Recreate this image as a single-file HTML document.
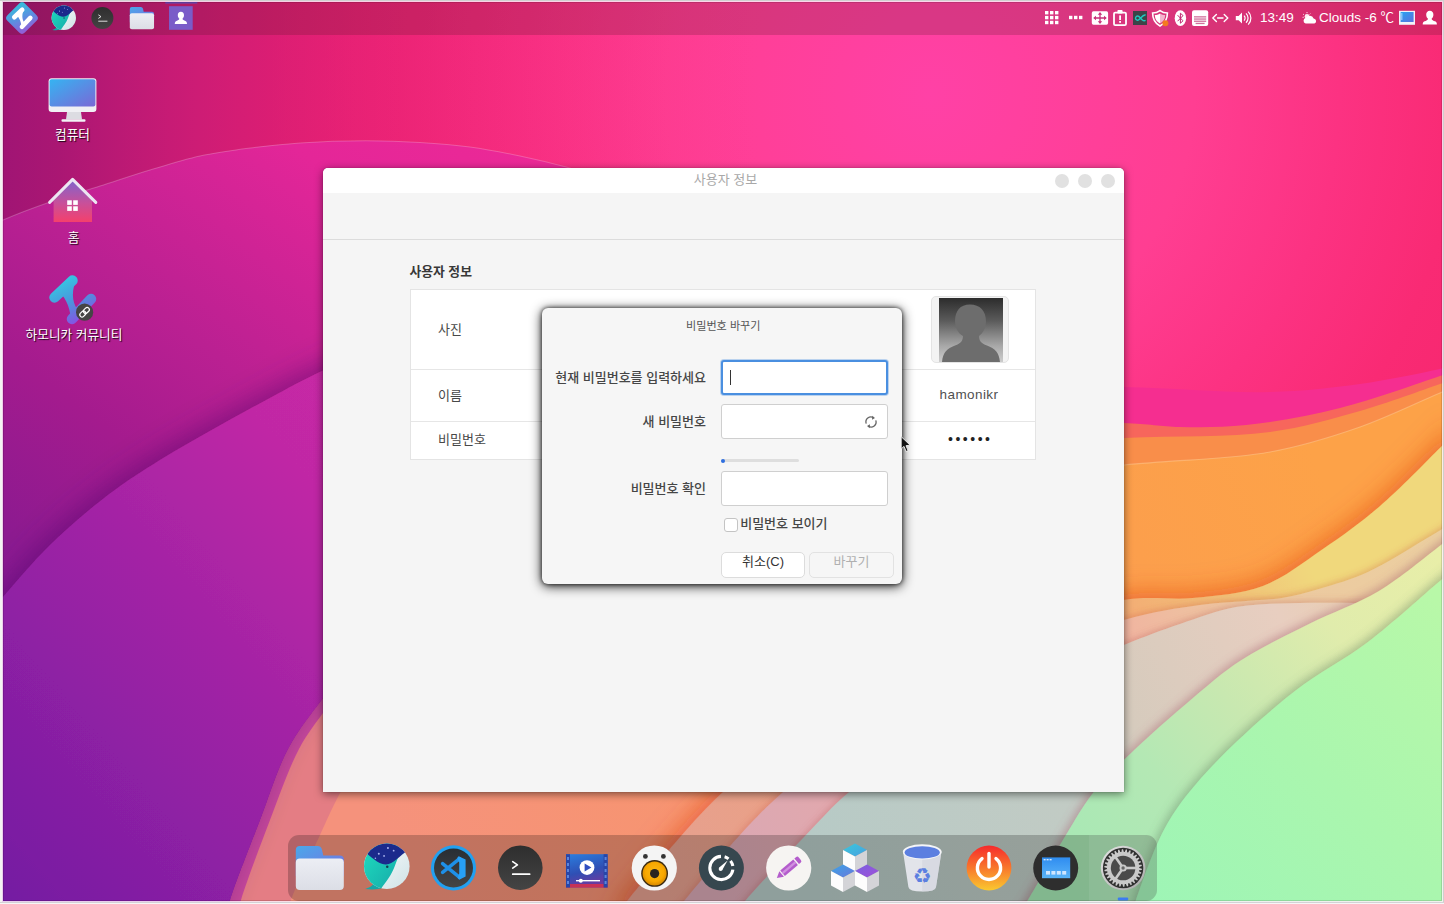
<!DOCTYPE html>
<html lang="ko">
<head>
<meta charset="utf-8">
<title>사용자 정보</title>
<style>
html,body{margin:0;padding:0;}
body{width:1444px;height:904px;overflow:hidden;background:#f3f4f2;position:relative;
 font-family:"Liberation Sans","Noto Sans CJK KR",sans-serif;font-size:13px;color:#444;}
#bg{position:absolute;left:2px;top:1px;width:1441px;height:901px;overflow:hidden;background:#f0258a;}
#desk{position:absolute;left:3px;top:2px;width:1439px;height:899px;overflow:hidden;}
#frame{position:absolute;left:2px;top:1px;width:1441px;height:901px;box-sizing:border-box;border:1px solid rgba(255,240,250,0.84);box-shadow:inset 0 0 0 1px rgba(0,0,0,0.12);pointer-events:none;}
.oe{position:absolute;}
#wall{position:absolute;left:-2px;top:-1px;width:1444px;height:904px;}
#panel{position:absolute;left:0;top:0;width:1439px;height:33px;background:rgba(80,25,35,0.22);}
.abs{position:absolute;}
/* window */
#win{position:absolute;left:320px;top:166px;width:801px;height:624px;background:#f5f5f5;border-radius:5px 5px 0 0;
 box-shadow:0 2px 9px rgba(0,0,0,0.5),0 0 1px rgba(0,0,0,0.45);}
#titlebar{position:absolute;left:0;top:0;width:100%;height:25px;background:#fff;border-radius:5px 5px 0 0;}
#title{position:absolute;left:0;width:100%;top:3px;text-align:center;color:#a8a8a8;font-size:13px;line-height:18px;padding-left:4px;box-sizing:border-box;}
.wb{position:absolute;top:6px;width:14px;height:14px;border-radius:50%;background:#e1e1e1;}
#sep{position:absolute;left:0;top:71px;width:100%;height:1px;background:#dcdcdc;}
#h1{position:absolute;left:86.5px;top:93.5px;font-weight:bold;font-size:12.8px;color:#383838;line-height:20px;}
#tbl{position:absolute;left:87px;top:121px;width:626px;height:171px;background:#fff;border:1px solid #e4e4e4;box-sizing:border-box;}
.rowline{position:absolute;left:0;width:100%;height:1px;background:#e6e6e6;}
.lbl{position:absolute;left:27px;font-size:13px;color:#484848;line-height:20px;}
/* dialog */
#dlg{position:absolute;left:538.5px;top:305.5px;width:360.5px;height:276.5px;background:#f6f6f6;border-radius:6px;
 box-shadow:0 2px 12px rgba(0,0,0,0.9),0 0 4px rgba(0,0,0,0.7);}
.dl{position:absolute;right:196px;font-size:13px;color:#464646;line-height:20px;white-space:nowrap;font-weight:500;}
.ent{position:absolute;left:179px;width:167.5px;height:35.6px;background:#fff;border:1px solid #cfcfcf;border-radius:3px;box-sizing:border-box;}
.btn{position:absolute;top:244px;height:26.2px;width:84px;border:1px solid #dcdcdc;border-radius:5px;box-sizing:border-box;text-align:center;font-size:13px;line-height:17px;}
.ptxt{position:absolute;color:#fff;font-size:13.5px;line-height:20px;white-space:nowrap;}
.dlabel{position:absolute;width:153px;text-align:center;color:#fff;font-size:12.7px;line-height:20px;text-shadow:1px 1px 1px rgba(0,0,0,0.85);white-space:nowrap;}
#icons{position:absolute;left:-3px;top:-2px;width:1444px;height:904px;pointer-events:none;}
#dockact{position:absolute;right:0;top:0;width:68px;height:100%;background:rgba(255,255,255,0.07);border-radius:0 11px 11px 0;}
/* dock */
#dock{position:absolute;left:285px;top:833px;width:869px;height:66px;border-radius:11px;background:rgba(0,0,0,0.21);}
</style>
</head>
<body>
<div id="bg">
<svg id="wall" viewBox="0 0 1444 904" width="1444" height="904">
<defs>
<filter id="shLs" x="-5%" y="-5%" width="110%" height="110%"><feDropShadow dx="-3" dy="-5" stdDeviation="12" flood-color="#e04010" flood-opacity="0.55"/></filter>
<filter id="shPk" x="-5%" y="-5%" width="110%" height="110%"><feDropShadow dx="-1" dy="-2" stdDeviation="3" flood-color="#c85040" flood-opacity="0.3"/></filter>
<filter id="shB" x="-5%" y="-5%" width="110%" height="110%"><feDropShadow dx="-1" dy="-2" stdDeviation="3" flood-color="#b05050" flood-opacity="0.3"/></filter>
<filter id="shG1" x="-5%" y="-5%" width="110%" height="110%"><feDropShadow dx="-2" dy="-3" stdDeviation="4" flood-color="#a05868" flood-opacity="0.4"/></filter>
<filter id="shG2" x="-5%" y="-5%" width="110%" height="110%"><feDropShadow dx="-2" dy="-3" stdDeviation="5" flood-color="#587858" flood-opacity="0.4"/></filter>
<filter id="shI" x="-5%" y="-5%" width="110%" height="110%"><feDropShadow dx="-4" dy="-6" stdDeviation="13" flood-color="#4a0868" flood-opacity="0.42"/></filter>
<filter id="shP" x="-5%" y="-5%" width="110%" height="110%"><feDropShadow dx="0" dy="2" stdDeviation="3" flood-color="#c02860" flood-opacity="0.3"/></filter>
<linearGradient id="gOr" x1="400" y1="860" x2="1320" y2="470" gradientUnits="userSpaceOnUse"><stop offset="0" stop-color="#f5927c"/><stop offset="0.45" stop-color="#f8966a"/><stop offset="0.8" stop-color="#fc9f4c"/><stop offset="1" stop-color="#fda248"/></linearGradient>
<linearGradient id="gLs" x1="650" y1="870" x2="1440" y2="470" gradientUnits="userSpaceOnUse"><stop offset="0" stop-color="#e5a090"/><stop offset="0.55" stop-color="#f5a272"/><stop offset="0.72" stop-color="#f0c078"/><stop offset="0.82" stop-color="#f0d87c"/><stop offset="1" stop-color="#f0d87c"/></linearGradient>
<linearGradient id="gPk" x1="700" y1="870" x2="1440" y2="540" gradientUnits="userSpaceOnUse"><stop offset="0" stop-color="#d8a8b5"/><stop offset="0.5" stop-color="#f2a8a0"/><stop offset="0.75" stop-color="#edc8a0"/><stop offset="1" stop-color="#ebcfa0"/></linearGradient>
<linearGradient id="gB" x1="800" y1="860" x2="1440" y2="540" gradientUnits="userSpaceOnUse"><stop offset="0" stop-color="#b6cac6"/><stop offset="0.38" stop-color="#c2cbc4"/><stop offset="0.5" stop-color="#d6cbbd"/><stop offset="0.75" stop-color="#e8cec0"/><stop offset="1" stop-color="#ebcfa0"/></linearGradient>
<linearGradient id="gG1" x1="1050" y1="880" x2="1440" y2="560" gradientUnits="userSpaceOnUse"><stop offset="0" stop-color="#a5e8b5"/><stop offset="0.3" stop-color="#b4e8b4"/><stop offset="0.5" stop-color="#c8e8b0"/><stop offset="0.75" stop-color="#e0ecac"/><stop offset="1" stop-color="#e8eea8"/></linearGradient>
<linearGradient id="gG2" x1="1150" y1="900" x2="1440" y2="600" gradientUnits="userSpaceOnUse"><stop offset="0" stop-color="#9ef5b6"/><stop offset="0.5" stop-color="#aaf6ae"/><stop offset="1" stop-color="#b8f8a8"/></linearGradient>
<radialGradient id="gTop" cx="930" cy="95" r="660" gradientUnits="userSpaceOnUse"><stop offset="0" stop-color="#ff41a6"/><stop offset="0.4" stop-color="#ff3e92"/><stop offset="0.62" stop-color="#fc3282"/><stop offset="0.8" stop-color="#f92a74"/><stop offset="1" stop-color="#f6266c"/></radialGradient>
<linearGradient id="gTopL" x1="0" y1="0" x2="520" y2="0" gradientUnits="userSpaceOnUse"><stop offset="0" stop-color="#8e0f6c"/><stop offset="0.25" stop-color="#a81270"/><stop offset="1" stop-color="#ee2080"/></linearGradient>
<linearGradient id="gDark" x1="0" y1="0" x2="760" y2="0" gradientUnits="userSpaceOnUse"><stop offset="0" stop-color="#8a1076" stop-opacity="0.8"/><stop offset="0.08" stop-color="#8a1076" stop-opacity="0.7"/><stop offset="0.26" stop-color="#a4127e" stop-opacity="0.5"/><stop offset="0.46" stop-color="#c0107e" stop-opacity="0.3"/><stop offset="0.75" stop-color="#e0187a" stop-opacity="0.12"/><stop offset="1" stop-color="#e81c7c" stop-opacity="0"/></linearGradient>
<linearGradient id="gLeft" x1="600" y1="140" x2="0" y2="900" gradientUnits="userSpaceOnUse"><stop offset="0" stop-color="#ee2a96"/><stop offset="0.2" stop-color="#e42698"/><stop offset="0.42" stop-color="#ba2092"/><stop offset="0.55" stop-color="#a41b8e"/><stop offset="0.7" stop-color="#8c1a90"/><stop offset="1" stop-color="#72189a"/></linearGradient>
<linearGradient id="gLeft2" x1="700" y1="300" x2="0" y2="900" gradientUnits="userSpaceOnUse"><stop offset="0" stop-color="#e42ca4"/><stop offset="0.45" stop-color="#c028a5"/><stop offset="0.62" stop-color="#a624a5"/><stop offset="0.8" stop-color="#8d20a4"/><stop offset="1" stop-color="#741ca2"/></linearGradient>
</defs>
<rect width="1444" height="904" fill="url(#gOr)"/>
<path d="M612.0,920.0 C617.3,913.3 621.0,908.5 628.0,900.0 C640.6,884.5 665.0,854.1 682.0,835.0 C696.0,819.2 706.4,807.4 722.0,793.0 C741.2,775.3 764.3,755.4 790.0,738.0 C819.4,718.1 855.3,698.3 890.0,682.0 C925.2,665.5 962.1,653.4 1000.0,640.0 C1039.9,626.0 1088.3,606.1 1124.0,600.0 C1150.0,595.5 1170.0,600.3 1193.0,598.0 C1216.3,595.7 1241.3,594.2 1263.0,586.0 C1284.6,577.8 1303.6,562.2 1323.0,549.0 C1342.3,535.9 1360.4,522.9 1379.0,507.0 C1399.7,489.3 1426.3,461.4 1441.0,447.0 C1449.2,438.9 1453.7,434.3 1460.0,428.0 L1460,920 L612,920 Z" fill="url(#gLs)" filter="url(#shLs)"/>
<path d="M668.0,920.0 C673.7,913.3 677.7,908.6 685.0,900.0 C698.1,884.5 722.5,854.0 740.0,835.0 C754.6,819.1 765.8,807.3 782.0,793.0 C801.5,775.8 823.7,756.6 850.0,740.0 C881.4,720.2 919.2,703.2 960.0,685.0 C1008.8,663.2 1079.2,633.2 1124.0,620.0 C1153.7,611.3 1177.8,608.2 1200.0,605.0 C1217.2,602.6 1231.6,602.2 1246.0,601.0 C1258.7,599.9 1270.0,599.9 1282.0,598.0 C1294.3,596.0 1305.9,592.9 1319.0,589.0 C1334.3,584.5 1351.5,579.5 1368.0,572.0 C1386.4,563.6 1407.5,549.8 1424.0,540.0 C1437.4,532.1 1448.0,525.3 1460.0,518.0 L1460,920 L668,920 Z" fill="url(#gPk)" filter="url(#shPk)"/>
<path d="M730.0,920.0 C735.3,913.3 738.8,908.4 746.0,900.0 C759.4,884.4 787.6,854.1 806.0,835.0 C821.1,819.3 832.0,806.6 848.0,793.0 C866.1,777.5 886.3,762.8 910.0,748.0 C938.8,730.0 975.3,711.8 1010.0,695.0 C1046.4,677.4 1092.5,657.8 1124.0,645.0 C1145.8,636.1 1161.2,630.4 1180.0,624.0 C1198.6,617.7 1216.5,610.5 1236.0,607.0 C1256.4,603.3 1277.5,603.7 1300.0,603.0 C1325.2,602.2 1353.3,603.0 1380.0,603.0 C1406.7,603.0 1433.3,603.0 1460.0,603.0 L1460,920 L730,920 Z" fill="url(#gB)" filter="url(#shB)"/>
<path d="M1015.0,920.0 C1019.3,913.3 1022.7,908.7 1028.0,900.0 C1037.5,884.6 1054.2,854.2 1066.0,835.0 C1075.6,819.4 1082.7,806.1 1093.0,793.0 C1103.4,779.8 1114.2,769.4 1128.0,756.0 C1146.0,738.5 1172.8,714.9 1193.0,698.0 C1209.7,684.0 1222.3,672.6 1240.0,661.0 C1260.3,647.7 1285.8,635.7 1309.0,624.0 C1332.1,612.4 1357.0,604.2 1379.0,591.0 C1401.0,577.8 1426.3,556.2 1441.0,545.0 C1449.2,538.7 1453.7,535.0 1460.0,530.0 L1460,920 L1015,920 Z" fill="url(#gG1)" filter="url(#shG1)"/>
<path d="M1130.0,920.0 C1132.0,913.3 1133.1,908.4 1136.0,900.0 C1141.0,885.3 1151.0,856.8 1159.0,840.0 C1165.1,827.1 1169.8,818.6 1178.0,807.0 C1188.6,792.0 1202.6,775.8 1219.0,759.0 C1239.9,737.6 1269.2,711.0 1295.0,691.0 C1318.9,672.4 1344.2,660.0 1368.0,642.0 C1392.6,623.4 1423.4,594.7 1440.0,581.0 C1448.7,573.9 1453.3,570.3 1460.0,565.0 L1460,920 L1130,920 Z" fill="url(#gG2)" filter="url(#shG2)"/>
<path d="M600.0,520.0 C700.0,510.0 807.3,499.8 900.0,490.0 C980.1,481.5 1057.3,471.7 1124.0,465.0 C1177.8,459.6 1227.5,459.7 1270.0,452.0 C1303.9,445.8 1331.2,437.1 1360.0,427.0 C1387.8,417.3 1422.2,400.3 1440.0,393.0 C1448.9,389.3 1453.3,387.7 1460.0,385.0 L1460,-20 L-20,-20 L-20,520 Z" fill="#f98e4a"/>
<path d="M600.0,520.0 C700.0,510.0 807.3,499.8 900.0,490.0 C980.1,481.5 1057.3,471.7 1124.0,465.0 C1177.8,459.6 1227.5,459.7 1270.0,452.0 C1303.9,445.8 1331.2,437.1 1360.0,427.0 C1387.8,417.3 1422.2,400.3 1440.0,393.0 C1448.9,389.3 1453.3,387.7 1460.0,385.0" fill="none" stroke="#ffd9a8" stroke-opacity="0.4" stroke-width="1.2"/>
<path d="M600.0,470.0 C700.0,463.3 807.3,455.6 900.0,450.0 C980.1,445.2 1057.3,441.2 1124.0,438.0 C1177.8,435.5 1227.4,437.8 1270.0,432.0 C1303.9,427.4 1331.1,419.2 1360.0,411.0 C1387.6,403.1 1422.2,390.1 1440.0,384.0 C1448.9,380.9 1453.3,379.3 1460.0,377.0 L1460,-20 L-20,-20 L-20,470 Z" fill="#f7665c"/>
<path d="M600.0,440.0 C700.0,435.0 807.3,427.7 900.0,425.0 C980.1,422.6 1074.2,421.4 1124.0,423.0 C1148.9,423.8 1160.6,426.6 1180.0,427.0 C1201.1,427.4 1222.2,427.5 1246.0,425.0 C1274.7,422.0 1308.4,415.9 1340.0,408.0 C1373.1,399.8 1419.4,382.9 1440.0,376.0 C1449.2,372.9 1453.3,371.3 1460.0,369.0 L1460,-20 L-20,-20 L-20,440 Z" fill="#f52e90"/>
<path d="M600.0,380.0 C700.0,381.7 807.3,383.8 900.0,385.0 C980.1,386.0 1057.3,385.6 1124.0,387.0 C1177.9,388.2 1227.2,393.2 1270.0,392.0 C1303.6,391.1 1331.0,388.0 1360.0,384.0 C1387.5,380.2 1422.3,372.9 1440.0,369.0 C1448.9,367.0 1453.3,365.7 1460.0,364.0 L1460,-20 L-20,-20 L-20,380 Z" fill="url(#gTop)"/>
<rect x="0" y="0" width="760" height="260" fill="url(#gDark)"/>
<path d="M285.0,920.0 C287.0,913.3 287.9,908.4 291.0,900.0 C296.8,884.4 311.2,854.0 320.0,835.0 C326.9,820.0 331.4,809.2 339.0,795.0 C348.2,777.9 359.3,758.3 372.0,740.0 C385.9,720.0 402.5,699.5 420.0,680.0 C438.4,659.5 460.0,640.0 480.0,620.0 L480,500 L-20,500 L-20,920 Z" fill="#e47d84"/>
<path d="M236.0,920.0 C237.7,913.3 238.3,908.8 241.0,900.0 C246.5,882.1 260.1,845.8 270.0,820.0 C279.4,795.5 288.8,768.3 299.0,749.0 C306.7,734.5 313.6,725.9 323.0,713.0 C334.8,696.8 349.5,677.4 365.0,660.0 C381.6,641.3 401.7,623.3 420.0,605.0 L420,500 L-20,500 L-20,920 Z" fill="#c4489a"/>
<path d="M-20.0,231.0 C-12.3,227.3 -6.1,223.9 3.0,220.0 C15.8,214.5 34.0,207.6 50.0,202.0 C66.3,196.3 83.3,191.3 100.0,186.0 C116.7,180.7 133.3,175.0 150.0,170.0 C166.6,165.0 183.2,159.7 200.0,156.0 C216.6,152.4 233.3,150.2 250.0,148.0 C266.6,145.8 282.2,144.2 300.0,143.0 C320.5,141.6 345.1,140.8 366.0,140.8 C384.9,140.8 402.4,141.4 420.0,142.5 C437.0,143.5 453.4,144.8 470.0,147.0 C486.7,149.3 503.7,152.6 520.0,156.0 C535.7,159.3 551.9,163.2 566.0,167.0 C578.2,170.3 588.3,173.2 600.0,177.0 C612.8,181.1 626.7,186.3 640.0,191.0 L900,300 L700,560 L420.0,590.0 C400.7,610.0 379.1,630.8 362.0,650.0 C347.3,666.6 335.3,681.5 323.0,698.0 C310.7,714.5 298.1,730.0 288.0,749.0 C276.8,770.1 269.4,795.6 260.0,820.0 C250.1,845.8 235.6,882.1 230.0,900.0 C227.3,908.8 226.7,913.3 225.0,920.0 L-20,920 Z" fill="url(#gLeft)"/>
<path d="M-20.0,231.0 C-12.3,227.3 -6.1,223.9 3.0,220.0 C15.8,214.5 34.0,207.6 50.0,202.0 C66.3,196.3 83.3,191.3 100.0,186.0 C116.7,180.7 133.3,175.0 150.0,170.0 C166.6,165.0 183.2,159.7 200.0,156.0 C216.6,152.4 233.3,150.2 250.0,148.0 C266.6,145.8 282.2,144.2 300.0,143.0 C320.5,141.6 345.1,140.8 366.0,140.8 C384.9,140.8 402.4,141.4 420.0,142.5 C437.0,143.5 453.4,144.8 470.0,147.0 C486.7,149.3 503.7,152.6 520.0,156.0 C535.7,159.3 551.9,163.2 566.0,167.0 C578.2,170.3 588.3,173.2 600.0,177.0 C612.8,181.1 626.7,186.3 640.0,191.0" fill="none" stroke="#ffffff" stroke-opacity="0.22" stroke-width="1.1"/>
<path d="M-20.0,625.0 C-12.3,615.7 -6.2,607.6 3.0,597.0 C15.8,582.2 32.9,561.7 50.0,545.0 C67.8,527.6 88.8,509.7 108.0,495.0 C125.4,481.7 142.1,471.2 160.0,460.0 C178.4,448.5 198.3,437.5 217.0,427.0 C234.9,416.9 252.4,407.4 270.0,398.0 C287.4,388.7 301.7,380.5 322.0,371.0 C349.3,358.2 381.9,343.2 420.0,330.0 C470.5,312.5 540.0,296.7 600.0,280.0 L700,600 L420.0,590.0 C400.7,610.0 379.1,630.8 362.0,650.0 C347.3,666.6 335.3,681.5 323.0,698.0 C310.7,714.5 298.1,730.0 288.0,749.0 C276.8,770.1 269.4,795.6 260.0,820.0 C250.1,845.8 235.6,882.1 230.0,900.0 C227.3,908.8 226.7,913.3 225.0,920.0 L-20,920 Z" fill="url(#gLeft2)" filter="url(#shI)"/>
</svg>
</div>
<div id="desk">
<div id="panel"></div>
<div class="ptxt" style="left:1257px;top:6px;">13:49</div>
<div class="ptxt" style="left:1316px;top:6px;">Clouds -6 ℃</div>
<div class="dlabel" style="left:-7px;top:123px;">컴퓨터</div>
<div class="dlabel" style="left:-6px;top:226px;">홈</div>
<div class="dlabel" style="left:-5.5px;top:323px;">하모니카 커뮤니티</div>
<div id="win">
 <div id="titlebar"><div id="title">사용자 정보</div>
  <div class="wb" style="left:732px"></div><div class="wb" style="left:755px"></div><div class="wb" style="left:778px"></div>
 </div>
 <div id="sep"></div>
 <div id="h1">사용자 정보</div>
 <div id="tbl">
  <div class="rowline" style="top:79px"></div><div class="rowline" style="top:131px"></div>
  <div class="lbl" style="top:30px">사진</div>
  <div class="lbl" style="top:96px">이름</div>
  <div class="lbl" style="top:140px">비밀번호</div>
  <div class="abs" style="left:520px;top:6px;width:78px;height:67px;background:#f3f3f3;border:1px solid #e4e4e4;border-radius:5px;box-sizing:border-box;"></div>
  <svg class="abs" style="left:528px;top:8px" width="64" height="64" viewBox="0 0 64 64">
   <defs><linearGradient id="avG" x1="0" y1="0" x2="0" y2="1"><stop offset="0" stop-color="#2c2c2c"/><stop offset="0.35" stop-color="#5a5a5a"/><stop offset="0.75" stop-color="#a8a8a8"/><stop offset="1" stop-color="#cdcdcd"/></linearGradient></defs>
   <rect width="64" height="64" fill="url(#avG)"/>
   <path d="M31,6.500 C41,6.500 47,13 47,23 C47,30 44,35 40,38 C40,42.500 42,45.500 48,47.500 C56,50.500 60,54 61,64 L3,64 C4,54 8,50.500 16,47.500 C22,45.500 24,42.500 24,38 C19,35 16,30 16,23 C16,13 21,6.500 31,6.500 Z" fill="#6d6d6d"/>
  </svg>
  <div class="abs" style="left:499px;top:95px;width:118px;text-align:center;font-size:13.5px;color:#505050;line-height:20px;letter-spacing:0.42px;">hamonikr</div>
  <div class="abs" style="left:499px;top:139px;width:118px;text-align:center;font-size:14px;color:#222;line-height:20px;letter-spacing:2.5px;padding-left:2.5px;box-sizing:border-box;">••••••</div>
 </div>
</div>
<div id="dlg">
 <div class="abs" style="left:0;width:100%;top:10px;text-align:center;font-size:11.1px;color:#555;line-height:16px;padding-left:3px;box-sizing:border-box;">비밀번호 바꾸기</div>
 <div class="dl" style="top:60px">현재 비밀번호를 입력하세요</div>
 <div class="ent" style="top:52.2px;border:2px solid #4a8fe0;box-shadow:0 0 0 1px rgba(74,143,224,0.35);"><div class="abs" style="left:7px;top:8px;width:1px;height:15px;background:#333;"></div></div>
 <div class="dl" style="top:104.5px">새 비밀번호</div>
 <div class="ent" style="top:96.2px"><svg class="abs" style="left:142px;top:10px" width="14" height="14" viewBox="0 0 14 14"><path d="M2.2,8.6 A5,5 0 0 1 9.500,2.700 M11.800,5.400 A5,5 0 0 1 4.500,11.300" fill="none" stroke="#666" stroke-width="1.3"/><path d="M8.300,0.800 L11,3 L8,4.800 Z M5.700,13.200 L3,11 L6,9.200 Z" fill="#666"/></svg></div>
 <div class="abs" style="left:179px;top:151.5px;width:78px;height:3px;border-radius:2px;background:#dedede;"></div>
 <div class="abs" style="left:179px;top:151px;width:4px;height:4px;border-radius:2px;background:#2f6fe0;"></div>
 <div class="abs" style="left:182px;top:210px;width:14px;height:14px;border:1px solid #c4c4c4;border-radius:3px;background:#fff;box-sizing:border-box;"></div>
 <div class="dl" style="top:171px">비밀번호 확인</div>
 <div class="ent" style="top:163px"></div>
 <div class="abs" style="left:198.7px;top:206.5px;font-size:13px;color:#464646;line-height:20px;font-weight:500;">비밀번호 보이기</div>
 <div class="btn" style="left:179.5px;background:#fff;color:#333;">취소(C)</div>
 <div class="btn" style="left:267.8px;width:84.5px;background:#f6f6f6;color:#b0b0b0;border-color:#e2e2e2;">바꾸기</div>
</div>
<div id="dock"><div id="dockact"></div></div>
<svg id="icons" viewBox="0 0 1444 904" width="1444" height="904">
<defs>
<linearGradient id="hmG" x1="0" y1="0" x2="1" y2="1"><stop offset="0" stop-color="#3cc0dc"/><stop offset="0.5" stop-color="#5a8fe0"/><stop offset="1" stop-color="#9258d6"/></linearGradient>
<linearGradient id="hmS" x1="0" y1="0" x2="0.6" y2="1"><stop offset="0" stop-color="#35c8e2"/><stop offset="0.5" stop-color="#4a96dc"/><stop offset="1" stop-color="#8a4ee4"/></linearGradient>
<linearGradient id="monG" x1="0" y1="0" x2="1" y2="1"><stop offset="0" stop-color="#35b4f2"/><stop offset="1" stop-color="#7a68d6"/></linearGradient>
<linearGradient id="homeG" x1="0" y1="0" x2="0" y2="1"><stop offset="0" stop-color="#8064cc"/><stop offset="0.55" stop-color="#c8509a"/><stop offset="1" stop-color="#f4406c"/></linearGradient>
<linearGradient id="fldT" x1="0" y1="0" x2="1" y2="1"><stop offset="0" stop-color="#4aa8ea"/><stop offset="1" stop-color="#7a6ee0"/></linearGradient>
<linearGradient id="fldB" x1="0" y1="0" x2="0" y2="1"><stop offset="0" stop-color="#eceef4"/><stop offset="1" stop-color="#dcdee6"/></linearGradient>
<linearGradient id="whT" x1="0" y1="0" x2="1" y2="1"><stop offset="0" stop-color="#1fe0c0"/><stop offset="1" stop-color="#16a8a8"/></linearGradient>
<linearGradient id="whW" x1="0" y1="0" x2="1" y2="1"><stop offset="0" stop-color="#ffffff"/><stop offset="1" stop-color="#cfe2e6"/></linearGradient>
<linearGradient id="termG" x1="0" y1="0" x2="0" y2="1"><stop offset="0" stop-color="#2e2e2e"/><stop offset="1" stop-color="#444"/></linearGradient>
<linearGradient id="vidG" x1="0" y1="0" x2="0.3" y2="1"><stop offset="0" stop-color="#2a7fe0"/><stop offset="0.6" stop-color="#2f4fb4"/><stop offset="1" stop-color="#6a3aa0"/></linearGradient>
<radialGradient id="spkG" cx="0.5" cy="0.45" r="0.55"><stop offset="0" stop-color="#fdb813"/><stop offset="0.7" stop-color="#f8a800"/><stop offset="1" stop-color="#d88a00"/></radialGradient>
<linearGradient id="pwrG" x1="0" y1="0" x2="0" y2="1"><stop offset="0" stop-color="#f62a2c"/><stop offset="0.5" stop-color="#f8782c"/><stop offset="1" stop-color="#fac830"/></linearGradient>
<linearGradient id="dskG" x1="0" y1="0" x2="0" y2="1"><stop offset="0" stop-color="#2f8cf0"/><stop offset="1" stop-color="#5ab4f8"/></linearGradient>
<linearGradient id="cubT1" x1="0" y1="0" x2="1" y2="1"><stop offset="0" stop-color="#38c8dc"/><stop offset="1" stop-color="#4aa0e0"/></linearGradient>
<linearGradient id="cubT2" x1="0" y1="0" x2="1" y2="1"><stop offset="0" stop-color="#3aa4e6"/><stop offset="1" stop-color="#6a78dc"/></linearGradient>
<linearGradient id="cubT3" x1="0" y1="0" x2="1" y2="1"><stop offset="0" stop-color="#7a60e0"/><stop offset="1" stop-color="#a050d8"/></linearGradient>
<linearGradient id="vsBg" x1="0" y1="0" x2="0" y2="1"><stop offset="0" stop-color="#282e34"/><stop offset="1" stop-color="#454545"/></linearGradient>
<linearGradient id="gearG" x1="0" y1="0" x2="1" y2="1"><stop offset="0" stop-color="#e4e4e4"/><stop offset="1" stop-color="#a8a8a8"/></linearGradient>
<linearGradient id="pdG" x1="0" y1="0" x2="1" y2="1"><stop offset="0" stop-color="#28a4f0"/><stop offset="1" stop-color="#5c70de"/></linearGradient>
<!-- whale symbol, unit circle r=1 centred at 0,0 -->
<g id="whale">
 <clipPath id="whClip"><circle cx="0" cy="0" r="1"/></clipPath>
 <path d="M-0.95,1.0 C-0.7,0.93 -0.58,0.82 -0.5,0.62 L-0.05,0.9 C-0.3,1.02 -0.6,1.04 -0.95,1.0 Z" fill="#17a6a6"/>
 <circle cx="0" cy="0" r="1" fill="url(#whW)"/>
 <g clip-path="url(#whClip)">
  <path d="M0.55,-0.5 C0.36,-0.1 0.32,0.2 0.06,0.55 C-0.1,0.78 -0.2,0.9 -0.32,1.1 L-1.1,1.1 L-1.1,-1.1 L0.55,-1.1 Z" fill="url(#whT)"/>
  <path d="M-1.1,-0.72 C-0.72,-0.46 -0.42,-0.1 -0.06,-0.08 C0.3,-0.06 0.5,-0.45 1.1,-0.82 L1.1,-1.1 L-1.1,-1.1 Z" fill="#1b2a8c"/>
  <circle cx="-0.35" cy="-0.55" r="0.045" fill="#aab4f0"/><circle cx="0.05" cy="-0.8" r="0.045" fill="#aab4f0"/><circle cx="-0.12" cy="-0.45" r="0.04" fill="#aab4f0"/><circle cx="0.3" cy="-0.68" r="0.04" fill="#aab4f0"/><circle cx="-0.5" cy="-0.35" r="0.035" fill="#aab4f0"/>
  <circle cx="0.02" cy="0.02" r="0.055" fill="#143c50"/>
 </g>
</g>
<g id="term">
 <circle cx="0" cy="0" r="1" fill="url(#termG)"/>
 <path d="M-0.34,-0.27 L-0.13,-0.125 L-0.34,0.02" fill="none" stroke="#fff" stroke-width="0.075" stroke-linecap="round" stroke-linejoin="round"/>
 <path d="M-0.34,0.29 L0.42,0.29" stroke="#fff" stroke-width="0.075" stroke-linecap="round"/>
</g>
<g id="folder">
 <!-- 48x44 box, origin top-left -->
 <path d="M0,4 Q0,0 4,0 L22,0 Q25,0 26,3 L27.5,9.5 L44,9.5 Q48,9.5 48,13 L48,30 L0,30 Z" fill="url(#fldT)"/>
 <rect x="0" y="12.5" width="48" height="31.5" rx="4" fill="url(#fldB)"/>
</g>
</defs>
<defs>
<linearGradient id="hmD" x1="0" y1="0.3" x2="1" y2="0.7"><stop offset="0" stop-color="#38bcdc"/><stop offset="0.5" stop-color="#5a90e0"/><stop offset="1" stop-color="#9060d8"/></linearGradient>
<linearGradient id="hmS2" x1="-12" y1="-20" x2="10" y2="22" gradientUnits="userSpaceOnUse"><stop offset="0" stop-color="#35c8e2"/><stop offset="0.5" stop-color="#4a96dc"/><stop offset="1" stop-color="#8a4ee4"/></linearGradient>
<g id="swirl">
 <path d="M-18,-2.1 L0,-19.1" stroke-width="10.5" stroke-linecap="round" fill="none"/>
 <path d="M4.5,-22 C-1,-10 -1,2 5,10 L-1.5,19 C-3,6 -8,-5 -16,-9 Z" stroke="none"/>
 <path d="M-0.5,19.4 L18.5,-0.6" stroke-width="10.5" stroke-linecap="round" fill="none"/>
</g>
</defs>
<!-- ===== panel left ===== -->
<rect x="-12.3" y="-12.3" width="24.6" height="24.6" rx="4" transform="translate(22,18) rotate(45)" fill="url(#hmD)"/>
<use href="#swirl" transform="translate(22.2,18.2) scale(0.44)" fill="#fff" stroke="#fff"/>
<use href="#whale" transform="translate(63.8,17.8) scale(12.2)"/>
<use href="#term" transform="translate(102.4,18) scale(11)"/>
<use href="#folder" transform="translate(129.8,7) scale(0.505)"/>
<rect x="165.3" y="2" width="32" height="1.6" fill="#6a45b0"/>
<rect x="169" y="6.2" width="23.7" height="23.6" fill="#7a5cc8"/>
<path d="M180.9,11.8 c2,0 3.1,1.5 3.1,3.4 c0,1.6 -0.8,2.9 -1.6,3.5 c0.2,1.2 1.6,1.7 3,2.3 c1.3,0.6 1.6,1.6 1.6,2.9 l-12.2,0 c0,-1.3 0.3,-2.3 1.6,-2.9 c1.4,-0.6 2.8,-1.1 3,-2.3 c-0.8,-0.6 -1.6,-1.9 -1.6,-3.5 c0,-1.9 1.1,-3.4 3.1,-3.4 Z" fill="#fff"/>
<!-- ===== desktop icons ===== -->
<g>
 <rect x="48.6" y="78.3" width="47.8" height="33.8" rx="3" fill="#f0f0f4"/>
 <rect x="49.6" y="79.3" width="45.8" height="27.2" rx="2" fill="url(#monG)"/>
 <path d="M67,112 L81,112 L82,119.4 L66,119.4 Z" fill="#dcdce2"/>
 <rect x="61.5" y="119.2" width="24" height="2.5" rx="1" fill="#f2f2f6"/>
</g>
<g>
 <path d="M53.6,198 L72.6,180 L92,198 L92,222 L53.6,222 Z" fill="url(#homeG)"/>
 <path d="M49.6,202.4 L72.6,179.4 L95.8,202.4" fill="none" stroke="#ece6f2" stroke-width="3" stroke-linecap="round" stroke-linejoin="round"/>
 <rect x="67.2" y="200.3" width="4.6" height="4.6" fill="#fff"/><rect x="73.2" y="200.3" width="4.6" height="4.6" fill="#fff"/>
 <rect x="67.2" y="206.3" width="4.6" height="4.6" fill="#fff"/><rect x="73.2" y="206.3" width="4.6" height="4.6" fill="#fff"/>
</g>
<g>
 <use href="#swirl" transform="translate(72.5,299.6)" fill="url(#hmS2)" stroke="url(#hmS2)"/>
 <circle cx="84.6" cy="312.2" r="8.6" fill="#454545"/>
 <g transform="translate(84.6,312.2) rotate(-45)" fill="none" stroke="#fff" stroke-width="1.2">
  <rect x="-5.8" y="-2.2" width="6.6" height="4.4" rx="2.2"/><rect x="-0.8" y="-2.2" width="6.6" height="4.4" rx="2.2"/>
 </g>
</g>
<!-- ===== dock icons ===== -->
<use href="#folder" transform="translate(295.8,846)"/>
<use href="#whale" transform="translate(386.8,866.2) scale(22.8)"/>
<g>
 <circle cx="453.5" cy="867.9" r="22.6" fill="#22a0f0"/>
 <circle cx="453.5" cy="867.9" r="19.5" fill="url(#vsBg)"/>
 <path d="M459.6,858.6 L442.6,872.4 M442.6,863.6 L459.6,877.4" stroke="#1e90e8" stroke-width="3.5" stroke-linecap="round" fill="none"/>
 <path d="M458.6,856.2 L465.6,859.4 L465.6,876.6 L459.2,879.8 L457.6,878 L459.2,873.6 L459.2,862.6 L457.2,858 Z" fill="#27a0f6"/>
</g>
<use href="#term" transform="translate(520.3,867.7) scale(22.3)"/>
<g>
 <rect x="566" y="854.2" width="41.6" height="33.3" fill="url(#vidG)"/>
 <rect x="566" y="884" width="41.6" height="3.5" fill="#d8304a" opacity="0.85"/>
 <g fill="#2846a8"><rect x="566" y="854.2" width="4" height="33.3"/><rect x="603.6" y="854.2" width="4" height="33.3"/></g>
 <g fill="#5c84dc"><rect x="567" y="857" width="2" height="3"/><rect x="567" y="863" width="2" height="3"/><rect x="567" y="869" width="2" height="3"/><rect x="567" y="875" width="2" height="3"/><rect x="567" y="881" width="2" height="3"/>
 <rect x="604.6" y="857" width="2" height="3"/><rect x="604.6" y="863" width="2" height="3"/><rect x="604.6" y="869" width="2" height="3"/><rect x="604.6" y="875" width="2" height="3"/><rect x="604.6" y="881" width="2" height="3"/></g>
 <circle cx="587" cy="867.6" r="7.4" fill="#fff"/>
 <path d="M584.6,863.6 L591.4,867.6 L584.6,871.6 Z" fill="#2f4fc0"/>
 <rect x="576" y="880" width="24" height="1.4" fill="#fff"/><circle cx="580.8" cy="880.7" r="2" fill="#fff"/>
</g>
<g>
 <circle cx="654.3" cy="868" r="22.6" fill="#f4f4f4"/>
 <circle cx="645.4" cy="856.4" r="2.4" fill="#333"/><circle cx="663.4" cy="856.4" r="2.4" fill="#333"/>
 <circle cx="654.6" cy="873.4" r="13.4" fill="#3a2a10"/>
 <circle cx="654.6" cy="873.4" r="12" fill="url(#spkG)"/>
 <circle cx="654.6" cy="873.6" r="4.6" fill="#2a2420"/>
</g>
<g>
 <circle cx="721.4" cy="868" r="22.5" fill="#36474f"/>
 <path d="M721.00,856.41 A11.6,11.6 0 1 0 732.89,869.61" fill="none" stroke="#fff" stroke-width="3.1"/>
 <path d="M724.60,856.85 A11.6,11.6 0 0 1 728.54,858.86 M730.54,860.86 A11.6,11.6 0 0 1 732.82,865.99" fill="none" stroke="#fff" stroke-width="3.1"/>
 <path d="M719.2,867.6 L727.6,860.4 L722,870.6 Z" fill="#fff"/><circle cx="720.6" cy="869" r="1.9" fill="#fff"/>
</g>
<g>
 <circle cx="788.7" cy="868" r="22.6" fill="#f6f4f2"/>
 <g transform="translate(788.7,868) rotate(-40)">
  <rect x="-8" y="-3.6" width="17" height="7.2" fill="#b45ccc"/>
  <rect x="-8" y="-1.1" width="17" height="2.2" fill="#d090e0"/>
  <path d="M10.4,-3.6 L12.5,-3.6 Q14.5,-3.6 14.5,-1.6 L14.5,1.6 Q14.5,3.6 12.5,3.6 L10.4,3.6 Z" fill="#b45ccc"/>
  <path d="M-9.2,-3.6 L-15.5,0 L-9.2,3.6 Z" fill="#b45ccc"/>
 </g>
</g>
<g>
 <!-- cubes -->
 <g id="cube1"><path d="M855,843.6 L867,850 L855,856.4 L843,850 Z" fill="url(#cubT1)"/><path d="M843,850 L855,856.4 L855,872 L843,865.6 Z" fill="#fdfdfd"/><path d="M867,850 L855,856.4 L855,872 L867,865.6 Z" fill="#d4d4d8"/></g>
 <g><path d="M843,864.6 L855,871 L843,877.4 L831,871 Z" fill="url(#cubT2)"/><path d="M831,871 L843,877.4 L843,892 L831,885.6 Z" fill="#fdfdfd"/><path d="M855,871 L843,877.4 L843,892 L855,885.6 Z" fill="#d4d4d8"/></g>
 <g><path d="M867,864.6 L879,871 L867,877.4 L855,871 Z" fill="url(#cubT3)"/><path d="M855,871 L867,877.4 L867,892 L855,885.6 Z" fill="#fdfdfd"/><path d="M879,871 L867,877.4 L867,892 L879,885.6 Z" fill="#d4d4d8"/></g>
</g>
<g>
 <!-- trash -->
 <path d="M903,851.5 L941.5,851.5 L936,887 Q935.5,891.5 922.2,891.5 Q909,891.5 908.4,887 Z" fill="#e2e4ea"/>
 <path d="M922.2,851.5 L941.5,851.5 L936,887 Q935.5,891.5 922.2,891.5 Z" fill="#d2d4dc" opacity="0.6"/>
 <ellipse cx="922.2" cy="851.8" rx="19.4" ry="7.6" fill="#f4f5f8"/>
 <ellipse cx="922.2" cy="852.4" rx="17.6" ry="6.2" fill="#5c7fe0"/>
 <text x="922.2" y="882.6" text-anchor="middle" font-family="DejaVu Sans, sans-serif" font-size="21" fill="#5c7fe0">♻</text>
</g>
<g>
 <circle cx="989" cy="868" r="22.4" fill="url(#pwrG)"/>
 <path d="M982,858.6 A11.6,11.6 0 1 0 996,858.6" fill="none" stroke="#fff" stroke-width="3.4" stroke-linecap="round"/>
 <path d="M989,853.5 L989,867" stroke="#fff" stroke-width="3.4" stroke-linecap="round"/>
</g>
<g>
 <circle cx="1055.7" cy="868" r="22.5" fill="#2e2e2e"/>
 <rect x="1042" y="857.4" width="28.2" height="20.8" fill="url(#dskG)"/>
 <g fill="#cfe6ff"><rect x="1043.6" y="859" width="2" height="1.4"/><rect x="1046.6" y="859" width="2" height="1.4"/><rect x="1049.6" y="859" width="2" height="1.4"/>
 <rect x="1046" y="871" width="4" height="3.6"/><rect x="1051.4" y="871" width="4" height="3.6"/><rect x="1056.8" y="871" width="4" height="3.6"/><rect x="1062.2" y="871" width="4" height="3.6"/></g>
</g>
<!-- gear -->
<circle cx="1123.1" cy="868" r="22.3" fill="url(#gearG)"/>
<circle cx="1123.1" cy="868" r="20.2" fill="#303030"/>
<path d="M1139.30,868.00 L1141.89,868.71 L1141.80,869.97 L1139.14,870.30 L1138.95,871.37 L1141.33,872.60 L1140.98,873.81 L1138.31,873.58 L1137.90,874.59 L1139.97,876.29 L1139.38,877.40 L1136.81,876.62 L1136.21,877.52 L1137.88,879.62 L1137.07,880.58 L1134.72,879.29 L1133.94,880.04 L1135.14,882.44 L1134.15,883.21 L1132.12,881.46 L1131.20,882.03 L1131.88,884.62 L1130.75,885.17 L1129.13,883.04 L1128.11,883.41 L1128.23,886.09 L1127.01,886.39 L1125.87,883.96 L1124.79,884.11 L1124.36,886.76 L1123.10,886.80 L1122.49,884.19 L1121.41,884.11 L1120.43,886.61 L1119.19,886.39 L1119.14,883.71 L1118.09,883.41 L1116.62,885.65 L1115.45,885.17 L1115.96,882.54 L1115.00,882.03 L1113.09,883.92 L1112.05,883.21 L1113.09,880.74 L1112.26,880.04 L1110.00,881.49 L1109.13,880.58 L1110.66,878.38 L1109.99,877.52 L1107.48,878.47 L1106.82,877.40 L1108.78,875.57 L1108.30,874.59 L1105.65,874.99 L1105.22,873.81 L1107.52,872.42 L1107.25,871.37 L1104.58,871.21 L1104.40,869.97 L1106.94,869.08 L1106.90,868.00 L1104.31,867.29 L1104.40,866.03 L1107.06,865.70 L1107.25,864.63 L1104.87,863.40 L1105.22,862.19 L1107.89,862.42 L1108.30,861.41 L1106.23,859.71 L1106.82,858.60 L1109.39,859.38 L1109.99,858.48 L1108.32,856.38 L1109.13,855.42 L1111.48,856.71 L1112.26,855.96 L1111.06,853.56 L1112.05,852.79 L1114.08,854.54 L1115.00,853.97 L1114.32,851.38 L1115.45,850.83 L1117.07,852.96 L1118.09,852.59 L1117.97,849.91 L1119.19,849.61 L1120.33,852.04 L1121.41,851.89 L1121.84,849.24 L1123.10,849.20 L1123.71,851.81 L1124.79,851.89 L1125.77,849.39 L1127.01,849.61 L1127.06,852.29 L1128.11,852.59 L1129.58,850.35 L1130.75,850.83 L1130.24,853.46 L1131.20,853.97 L1133.11,852.08 L1134.15,852.79 L1133.11,855.26 L1133.94,855.96 L1136.20,854.51 L1137.07,855.42 L1135.54,857.62 L1136.21,858.48 L1138.72,857.53 L1139.38,858.60 L1137.42,860.43 L1137.90,861.41 L1140.55,861.01 L1140.98,862.19 L1138.68,863.58 L1138.95,864.63 L1141.62,864.79 L1141.80,866.03 L1139.26,866.92 Z" fill="#c9c9c9"/>
<circle cx="1123.1" cy="868" r="12.3" fill="#4a4a4a"/>
<path d="M1123.1,868 L1137.10,868.00" stroke="#c9c9c9" stroke-width="2.6"/>
<path d="M1123.1,868 L1115.07,879.47" stroke="#c9c9c9" stroke-width="2.6"/>
<path d="M1123.1,868 L1115.07,856.53" stroke="#c9c9c9" stroke-width="2.6"/>
<circle cx="1123.1" cy="868" r="3.6" fill="#c9c9c9"/>
<circle cx="1123.1" cy="868" r="1.7" fill="#666"/>
<!-- ===== panel right ===== -->
<g fill="#fff">
 <!-- grid -->
 <g id="gridrow"><rect x="1045" y="11" width="3.4" height="3.4"/><rect x="1050" y="11" width="3.4" height="3.4"/><rect x="1055" y="11" width="3.4" height="3.4"/></g>
 <use href="#gridrow" y="4.9"/><use href="#gridrow" y="9.8"/>
 <!-- dots -->
 <rect x="1069" y="15.8" width="3.4" height="3.4"/><rect x="1074" y="15.8" width="3.4" height="3.4"/><rect x="1079" y="15.8" width="3.4" height="3.4"/>
</g>
<!-- move -->
<rect x="1091.8" y="11.3" width="16.3" height="13.4" rx="1.6" fill="#fff"/>
<g stroke="#c8307a" stroke-width="1.3" fill="#c8307a">
 <path d="M1094.6,18 L1105.4,18 M1100,13.4 L1100,22.6" fill="none"/>
 <path d="M1093.2,18 L1096,15.8 L1096,20.2 Z M1106.8,18 L1104,15.8 L1104,20.2 Z M1100,12 L1097.8,14.8 L1102.2,14.8 Z M1100,24 L1097.8,21.2 L1102.2,21.2 Z" stroke="none"/>
</g>
<!-- clipboard -->
<g>
 <rect x="1114" y="12.6" width="12" height="12.6" rx="1.2" fill="none" stroke="#fff" stroke-width="1.8"/>
 <rect x="1117.4" y="10" width="5.2" height="3.6" rx="1" fill="#fff"/>
 <rect x="1119.2" y="15.4" width="1.8" height="4.6" fill="#fff"/><rect x="1119.2" y="21" width="1.8" height="1.8" fill="#fff"/>
</g>
<!-- teal app -->
<rect x="1133" y="11" width="14" height="14" fill="#3c4448"/>
<path d="M1145.6,14.8 C1143.2,15 1141.8,16.6 1140.4,18.2 C1139,19.8 1137.4,21 1136,19.6 C1134.8,18.2 1136,16 1137.6,16 C1139.4,16 1140.6,18.6 1142.4,20 C1143.4,20.8 1144.6,20.8 1145.6,20.4" fill="none" stroke="#20c8c0" stroke-width="1.4"/>
<!-- shield -->
<path d="M1160,10.6 C1162.4,12.4 1165,13 1167.4,13 C1167.4,19.6 1164.6,23.6 1160,26 C1155.4,23.6 1152.6,19.6 1152.6,13 C1155,13 1157.6,12.4 1160,10.6 Z" fill="none" stroke="#fff" stroke-width="1.6"/>
<path d="M1160,13.4 C1161.8,14.6 1163.4,15 1165.2,15.1 C1165,19.4 1163.2,22 1160,23.6 Z" fill="#f4b6cf"/>
<path d="M1160,13.4 C1158.2,14.6 1156.6,15 1154.8,15.1 C1155,19.4 1156.8,22 1160,23.6 Z" fill="#fff"/>
<circle cx="1165.4" cy="23.2" r="3" fill="#f47a20"/>
<!-- bluetooth -->
<ellipse cx="1180.4" cy="18.2" rx="5.7" ry="7.9" fill="#fff"/>
<path d="M1177.6,15.2 L1183,20.8 L1180.4,23.2 L1180.4,13.2 L1183,15.6 L1177.6,21.2" fill="none" stroke="#c02670" stroke-width="1"/>
<!-- keyboard -->
<rect x="1192" y="10.2" width="16.2" height="15.8" rx="2" fill="#fff"/>
<g fill="#d2709c"><rect x="1194" y="16.2" width="12.2" height="1.3"/><rect x="1194" y="18.4" width="12.2" height="1.3"/><rect x="1194" y="20.6" width="12.2" height="1.3"/><rect x="1195.6" y="22.8" width="9" height="1.3"/></g>
<!-- arrows -->
<path d="M1216.4,14.4 L1212.8,18 L1216.4,21.6 M1224.2,14.4 L1227.8,18 L1224.2,21.6 M1217.6,18 L1223,18" fill="none" stroke="#fff" stroke-width="1.4" stroke-linecap="round" stroke-linejoin="round"/>
<!-- volume -->
<path d="M1235.8,16 L1238.6,16 L1242,12.6 L1242,23.6 L1238.6,20.2 L1235.8,20.2 Z" fill="#fff"/>
<path d="M1244,15.6 A3.4,3.4 0 0 1 1244,20.6 M1246,13.4 A6.4,6.4 0 0 1 1246,22.8 M1248.2,11.6 A9.2,9.2 0 0 1 1248.2,24.6" fill="none" stroke="#fff" stroke-width="1.2"/>
<!-- weather -->
<circle cx="1307" cy="16.4" r="2.4" fill="#ffe9f1"/>
<g stroke="#ffe9f1" stroke-width="0.9"><path d="M1307,12 L1307,13.2 M1303,14 L1303.9,14.7 M1310.4,13.6 L1309.6,14.4 M1302.6,17.4 L1303.8,17.2"/></g>
<path d="M1305.6,23.6 A3,3 0 0 1 1306,17.8 A4.2,4.2 0 0 1 1313.6,18.4 A2.7,2.7 0 0 1 1314.4,23.6 Z" fill="#fff"/>
<!-- desktop -->
<rect x="1399" y="10.8" width="16" height="14" fill="#f1f3f8"/>
<rect x="1400.6" y="12" width="13" height="10" fill="url(#pdG)"/>
<rect x="1401.4" y="13" width="0.9" height="7" fill="#bfe2ff"/>
<!-- user -->
<path d="M1429.8,10.8 c2.3,0 3.6,1.7 3.6,3.9 c0,1.9 -0.9,3.3 -1.8,4 c0.2,1.4 1.8,2 3.4,2.6 c1.5,0.7 1.9,1.6 1.9,3.2 l-14.2,0 c0,-1.6 0.4,-2.5 1.9,-3.2 c1.6,-0.6 3.2,-1.2 3.4,-2.6 c-0.9,-0.7 -1.8,-2.1 -1.8,-4 c0,-2.2 1.3,-3.9 3.6,-3.9 Z" fill="#fff"/>
<!-- dock indicator -->
<rect x="1117.8" y="897.6" width="10.4" height="3" rx="1" fill="#3b7cf0"/>
<!-- cursor -->
<path d="M901.2,436.6 L901.2,448.9 L904,446.4 L906.1,451.5 L908.1,450.6 L906,445.7 L910.1,445.2 Z" fill="#111" stroke="#f4f4f4" stroke-width="0.9" stroke-linejoin="round"/>
</svg>

</div>
<div id="frame"></div>
<div class="oe" style="left:0;top:0;width:1444px;height:1px;background:#cfcfcf;"></div>
<div class="oe" style="left:1443px;top:0;width:1px;height:904px;background:#cdd0cd;"></div>
<div class="oe" style="left:0;top:902px;width:1444px;height:1px;background:#d4d2d6;"></div>
<div class="oe" style="left:0;top:903px;width:1444px;height:1px;background:#f6f6f6;"></div>
</body>
</html>
